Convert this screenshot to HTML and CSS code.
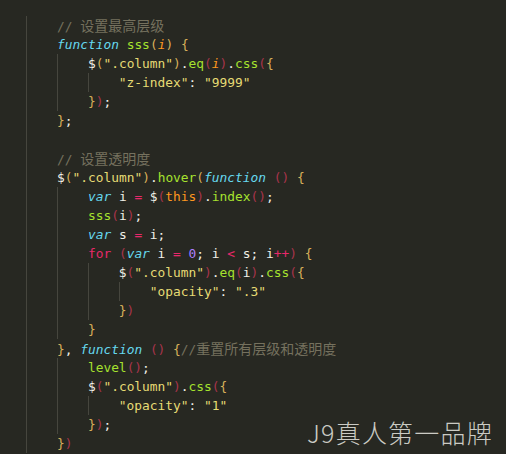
FILE: index.html
```html
<!DOCTYPE html>
<html lang="zh-CN">
<head>
<meta charset="utf-8">
<title>code</title>
<link rel="stylesheet" href="styles.css">
</head>
<body>
<div class="editor">
<div class="code">
<div class="line"><span class="g"></span><span class="c">// <span class="cjk">设置最高层级</span></span></div>
<div class="line"><span class="g"></span><span class="k">function</span> <span class="f">sss</span><span class="b1">(</span><span class="p">i</span><span class="b1">)</span> <span class="b1">{</span></div>
<div class="line"><span class="g"></span><span class="g"></span>$<span class="b1">(</span><span class="s">".column"</span><span class="b1">)</span>.<span class="f">eq</span><span class="b2">(</span><span class="p">i</span><span class="b2">)</span>.<span class="f">css</span><span class="b2">(</span><span class="b1">{</span></div>
<div class="line"><span class="g"></span><span class="g"></span><span class="g"></span><span class="s">"z-index"</span>: <span class="s">"9999"</span></div>
<div class="line"><span class="g"></span><span class="g"></span><span class="b1">}</span><span class="b2">)</span>;</div>
<div class="line"><span class="g"></span><span class="b1">}</span>;</div>
<div class="line"><span class="g"></span></div>
<div class="line"><span class="g"></span><span class="c">// <span class="cjk">设置透明度</span></span></div>
<div class="line"><span class="g"></span>$<span class="b1">(</span><span class="s">".column"</span><span class="b1">)</span>.<span class="f">hover</span><span class="b1">(</span><span class="k">function</span> <span class="b2">()</span> <span class="b1">{</span></div>
<div class="line"><span class="g"></span><span class="g"></span><span class="k">var</span> i <span class="o">=</span> $<span class="b2">(</span><span class="t">this</span><span class="b2">)</span>.<span class="f">index</span><span class="b2">()</span>;</div>
<div class="line"><span class="g"></span><span class="g"></span><span class="f">sss</span><span class="b2">(</span>i<span class="b2">)</span>;</div>
<div class="line"><span class="g"></span><span class="g"></span><span class="k">var</span> s <span class="o">=</span> i;</div>
<div class="line"><span class="g"></span><span class="g"></span><span class="o">for</span> <span class="b2">(</span><span class="k">var</span> i <span class="o">=</span> <span class="n">0</span>; i <span class="o">&lt;</span> s; i<span class="o">++</span><span class="b2">)</span> <span class="b1">{</span></div>
<div class="line"><span class="g"></span><span class="g"></span><span class="g"></span>$<span class="b2">(</span><span class="s">".column"</span><span class="b2">)</span>.<span class="f">eq</span><span class="b2">(</span>i<span class="b2">)</span>.<span class="f">css</span><span class="b2">(</span><span class="b1">{</span></div>
<div class="line"><span class="g"></span><span class="g"></span><span class="g"></span><span class="g"></span><span class="s">"opacity"</span>: <span class="s">".3"</span></div>
<div class="line"><span class="g"></span><span class="g"></span><span class="g"></span><span class="b1">}</span><span class="b2">)</span></div>
<div class="line"><span class="g"></span><span class="g"></span><span class="b1">}</span></div>
<div class="line"><span class="g"></span><span class="b1">}</span>, <span class="k">function</span> <span class="b2">()</span> <span class="b1">{</span><span class="c">//<span class="cjk">重置所有层级和透明度</span></span></div>
<div class="line"><span class="g"></span><span class="g"></span><span class="f">level</span><span class="b2">()</span>;</div>
<div class="line"><span class="g"></span><span class="g"></span>$<span class="b2">(</span><span class="s">".column"</span><span class="b2">)</span>.<span class="f">css</span><span class="b2">(</span><span class="b1">{</span></div>
<div class="line"><span class="g"></span><span class="g"></span><span class="g"></span><span class="s">"opacity"</span>: <span class="s">"1"</span></div>
<div class="line"><span class="g"></span><span class="g"></span><span class="b1">}</span><span class="b2">)</span>;</div>
<div class="line"><span class="g"></span><span class="b1">}</span><span class="b2">)</span></div>
</div>
<div class="watermark">J9真人第一品牌</div>
</div>
</body>
</html>
```
FILE: styles.css
```css
html, body {
  margin: 0;
  padding: 0;
  background: #272822;
}
.editor {
  position: relative;
  width: 506px;
  height: 454px;
  overflow: hidden;
  background: #272822;
}
.code {
  padding-top: 16px;
  padding-left: 26px;
  font-family: "DejaVu Sans Mono", "Liberation Mono", monospace;
  font-size: 12.87px;
  color: #f0f0e8;
}
.line {
  height: 19px;
  line-height: 19px;
  white-space: pre;
  overflow: hidden;
}
.g {
  display: inline-block;
  width: 4ch;
  height: 19px;
  vertical-align: top;
  box-sizing: border-box;
  border-left: 1px solid #46463e;
}
.cjk {
  font-family: "Noto Sans CJK SC", sans-serif;
  font-size: 14px;
  line-height: 19px;
}
.c { color: #75715e; }
.k { color: #66d9ef; font-style: italic; }
.f { color: #a6e22e; }
.p { color: #fd971f; font-style: italic; }
.s { color: #e6db74; }
.o { color: #e8286a; }
.n { color: #ae81ff; }
.t { color: #fd971f; }
.b1 { color: #d8b05a; }
.b2 { color: #a8344c; }
.watermark {
  position: absolute;
  left: 307px;
  top: 415px;
  font-family: "Noto Sans CJK SC", sans-serif;
  font-weight: 300;
  font-size: 25px;
  line-height: 34px;
  color: #cbcbc4;
  letter-spacing: 1.2px;
}
```
